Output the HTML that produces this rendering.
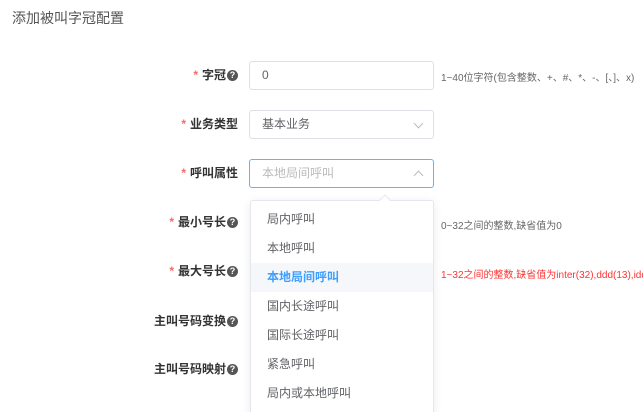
<!DOCTYPE html>
<html><head><meta charset="utf-8"><style>
*{margin:0;padding:0;box-sizing:border-box}
html{width:643px;height:412px;overflow:hidden}
body{width:643px;height:412px;overflow:hidden;background:#fff;font-family:"Liberation Sans","Noto Sans CJK SC",sans-serif;position:relative;color:#606266}
.t{position:absolute;left:12px;top:8px;font-size:14px;color:#555}
.lab{position:absolute;right:405px;font-size:12px;color:#333;font-weight:bold;white-space:nowrap;line-height:14px;display:flex;align-items:center}
.lab .s{color:#f56c6c;margin-right:4px}
.q{display:inline-block;width:11px;height:11px;border-radius:50%;background:#555;color:#fff;font-size:9px;line-height:11px;text-align:center;margin-left:1px}
.in{position:absolute;left:249px;width:185px;height:29px;border:1px solid #dcdfe6;border-radius:3px;font-size:12px;line-height:27px;padding-left:12px;color:#606266}
.in.f{border-color:#66b1ff;color:#bbb}
.ar{position:absolute;right:11px;top:9px;width:7px;height:7px;border-right:1px solid #bbb;border-bottom:1px solid #bbb;transform:rotate(45deg)}
.ar.u{top:12px;transform:rotate(-135deg)}
.h{position:absolute;left:441px;font-size:10px;color:#666;white-space:nowrap}
.dd{position:absolute;left:250px;top:200px;width:184px;height:230px;border:1px solid #e4e7ed;border-radius:3px;background:#fff;box-shadow:0 2px 10px rgba(0,0,0,.08)}
.dd .tri{position:absolute;left:130px;top:-5px;width:8px;height:8px;background:#fff;border-left:1px solid #e4e7ed;border-top:1px solid #e4e7ed;transform:rotate(45deg)}
.it{position:absolute;left:0;width:182px;height:29px;line-height:29px;padding-left:16px;font-size:12px;color:#606266}
.it.a{background:#f5f7fa;color:#409eff;font-weight:bold}
</style></head><body>
<div class="t">添加被叫字冠配置</div>
<div class="lab" style="top:68px"><span class="s">*</span>字冠<span class="q">?</span></div>
<div class="in" style="top:61px">0</div>
<div class="h" style="top:69px">1~40位字符(包含整数、+、#、*、-、[、]、x)</div>
<div class="lab" style="top:117px;right:405px"><span class="s">*</span>业务类型</div>
<div class="in" style="top:110px">基本业务<span class="ar"></span></div>
<div class="lab" style="top:166px"><span class="s">*</span>呼叫属性</div>
<div class="in f" style="top:159px">本地局间呼叫<span class="ar u"></span></div>
<div class="lab" style="top:215px"><span class="s">*</span>最小号长<span class="q">?</span></div>
<div class="h" style="top:217px">0~32之间的整数,缺省值为0</div>
<div class="lab" style="top:264px"><span class="s">*</span>最大号长<span class="q">?</span></div>
<div class="h" style="top:266px;color:#f33">1~32之间的整数,缺省值为inter(32),ddd(13),idd</div>
<div class="lab" style="top:314px">主叫号码变换<span class="q">?</span></div>
<div class="lab" style="top:362px">主叫号码映射<span class="q">?</span></div>
<div class="dd"><div class="tri"></div>
<div class="it" style="top:4px">局内呼叫</div>
<div class="it" style="top:33px">本地呼叫</div>
<div class="it a" style="top:62px">本地局间呼叫</div>
<div class="it" style="top:91px">国内长途呼叫</div>
<div class="it" style="top:120px">国际长途呼叫</div>
<div class="it" style="top:149px">紧急呼叫</div>
<div class="it" style="top:178px">局内或本地呼叫</div>
</div>
</body></html>
